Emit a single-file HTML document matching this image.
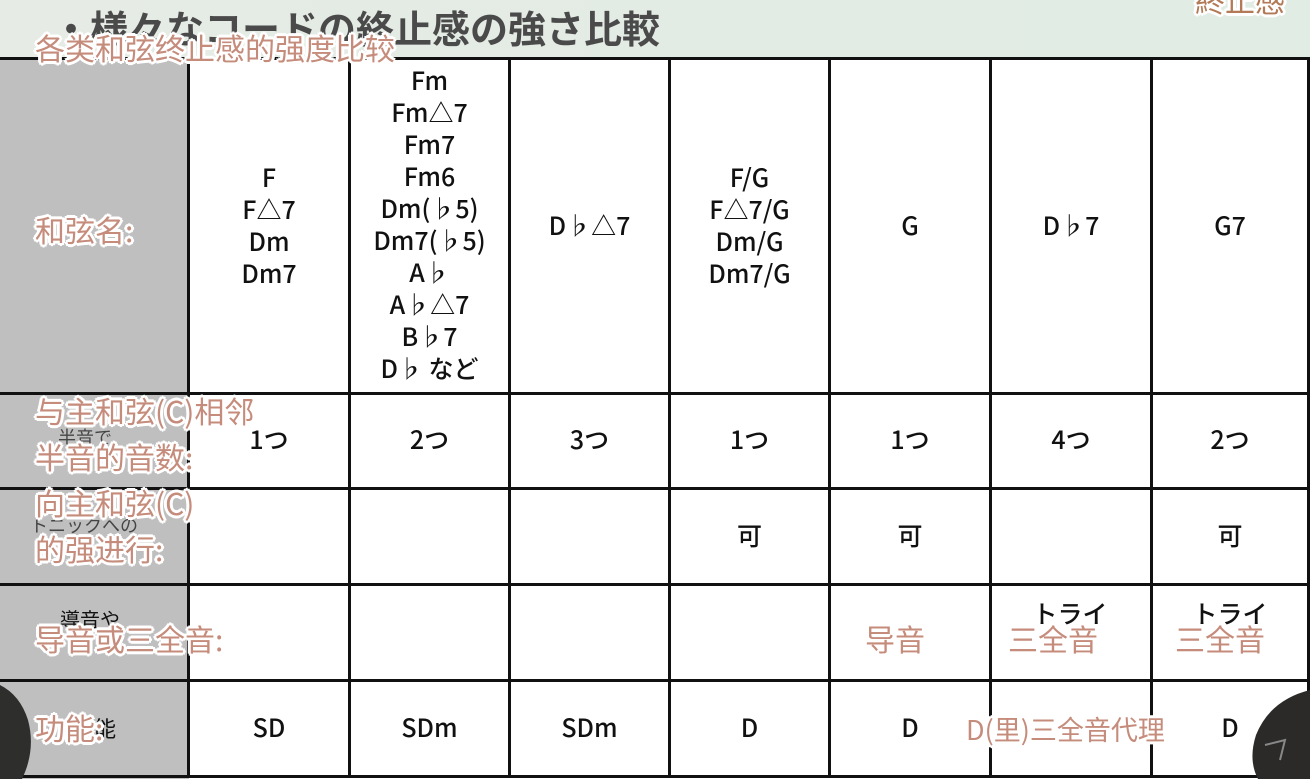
<!DOCTYPE html>
<html><head><meta charset="utf-8">
<style>
*{margin:0;padding:0;box-sizing:border-box}
body{width:1310px;height:779px;overflow:hidden;position:relative;background:#fff;font-family:"Liberation Sans","Noto Sans CJK JP",sans-serif}
.top{position:absolute;left:0;top:0;width:1310px;height:58px;background:linear-gradient(90deg,#e6ebe5,#e0ece4)}
.title{position:absolute;left:52px;top:-1px;font-size:38px;font-weight:bold;color:#4a4a4a;font-family:"Noto Sans CJK JP",sans-serif;white-space:nowrap}
.grey{position:absolute;left:0;top:58px;width:189px;height:721px;background:#bfbfbf}
.h{position:absolute;left:0;width:1310px;height:3px;background:#111}
.v{position:absolute;top:58px;width:3px;height:720px;background:#111}
.c{position:absolute;text-align:center;font-size:25px;font-weight:500;line-height:32px;color:#111;font-family:"Noto Sans CJK JP",sans-serif;white-space:nowrap}
.sub{position:absolute;font-family:"Noto Sans CJK SC",sans-serif;font-size:30px;color:#c58b7b;line-height:34px;white-space:nowrap;
text-shadow:2px 0 #fff,-2px 0 #fff,0 2px #fff,0 -2px #fff,2px 2px #fff,-2px -2px #fff,2px -2px #fff,-2px 2px #fff,3px 0 #fff,-3px 0 #fff,0 3px #fff,0 -3px #fff}
.jp{position:absolute;font-size:20px;color:#111;font-family:"Noto Sans CJK JP",sans-serif;white-space:nowrap}
</style></head><body>
<div class="top"></div>
<div class="title">・様々なコードの終止感の強さ比較</div>
<div class="sub" style="left:1195px;top:-18px;color:#b27a56">終止感</div>
<div class="grey"></div>
<div class="h" style="top:57px"></div>
<div class="h" style="top:392px"></div>
<div class="h" style="top:487px"></div>
<div class="h" style="top:583px"></div>
<div class="h" style="top:679px"></div>
<div class="h" style="top:775px"></div>
<div class="v" style="left:187px"></div>
<div class="v" style="left:348px"></div>
<div class="v" style="left:508px"></div>
<div class="v" style="left:668px"></div>
<div class="v" style="left:828px"></div>
<div class="v" style="left:989px"></div>
<div class="v" style="left:1150px"></div>
<div class="v" style="left:1307px"></div>

<div class="c" style="left:190px;width:158px;top:161px">F<br>F△7<br>Dm<br>Dm7</div>
<div class="c" style="left:351px;width:157px;top:64px">Fm<br>Fm△7<br>Fm7<br>Fm6<br>Dm(♭5)<br>Dm7(♭5)<br>A♭<br>A♭△7<br>B♭7<br>D♭ など</div>
<div class="c" style="left:511px;width:157px;top:209px">D♭△7</div>
<div class="c" style="left:671px;width:157px;top:161px">F/G<br>F△7/G<br>Dm/G<br>Dm7/G</div>
<div class="c" style="left:831px;width:158px;top:209px">G</div>
<div class="c" style="left:992px;width:158px;top:209px">D♭7</div>
<div class="c" style="left:1153px;width:154px;top:209px">G7</div>

<div class="c" style="left:190px;width:158px;top:423px">1つ</div>
<div class="c" style="left:351px;width:157px;top:423px">2つ</div>
<div class="c" style="left:511px;width:157px;top:423px">3つ</div>
<div class="c" style="left:671px;width:157px;top:423px">1つ</div>
<div class="c" style="left:831px;width:158px;top:423px">1つ</div>
<div class="c" style="left:992px;width:158px;top:423px">4つ</div>
<div class="c" style="left:1153px;width:154px;top:423px">2つ</div>

<div class="c" style="left:671px;width:157px;top:519px">可</div>
<div class="c" style="left:831px;width:158px;top:519px">可</div>
<div class="c" style="left:1153px;width:154px;top:519px">可</div>

<div class="jp" style="left:60px;top:604px">導音や</div>
<div class="c" style="left:1000px;width:140px;top:597px">トライ</div>
<div class="c" style="left:1160px;width:140px;top:597px">トライ</div>

<div class="c" style="left:190px;width:158px;top:711px">SD</div>
<div class="c" style="left:351px;width:157px;top:711px">SDm</div>
<div class="c" style="left:511px;width:157px;top:711px">SDm</div>
<div class="c" style="left:671px;width:157px;top:711px">D</div>
<div class="c" style="left:831px;width:158px;top:711px">D</div>
<div class="c" style="left:1153px;width:154px;top:711px">D</div>
<div class="jp" style="left:94px;top:712px;font-size:22px">能</div>

<div class="jp" style="left:58px;top:424px;font-size:18px;opacity:.7">半音で</div>
<div class="jp" style="left:30px;top:512px;font-size:18px;opacity:.7">トニックへの</div>

<svg style="position:absolute;left:0;top:680px" width="40" height="99"><path d="M0 5 Q20 15 28 40 Q36 70 22 99 L0 99Z" fill="#2e2f2c"/></svg>
<svg style="position:absolute;left:1250px;top:690px" width="60" height="89"><path d="M60 0 L60 89 L8 89 Q-2 70 6 45 Q20 10 60 0Z" fill="#2b2a29"/><path d="M15 55 L35 50 L30 70" stroke="#888" fill="none" stroke-width="2"/></svg>

<div class="sub" style="left:35px;top:30px;font-size:30px">各类和弦终止感的强度比较</div>
<div class="sub" style="left:35px;top:212px">和弦名:</div>
<div class="sub" style="left:35px;top:393px">与主和弦(C)相邻</div>
<div class="sub" style="left:35px;top:439px">半音的音数:</div>
<div class="sub" style="left:35px;top:485px">向主和弦(C)</div>
<div class="sub" style="left:35px;top:531px">的强进行:</div>
<div class="sub" style="left:35px;top:621px">导音或三全音:</div>
<div class="sub" style="left:35px;top:710px">功能:</div>
<div class="sub" style="left:865px;top:621px">导音</div>
<div class="sub" style="left:1008px;top:621px">三全音</div>
<div class="sub" style="left:1175px;top:621px">三全音</div>
<div class="sub" style="left:966px;top:712px;font-size:27px">D(里)三全音代理</div>
</body></html>
